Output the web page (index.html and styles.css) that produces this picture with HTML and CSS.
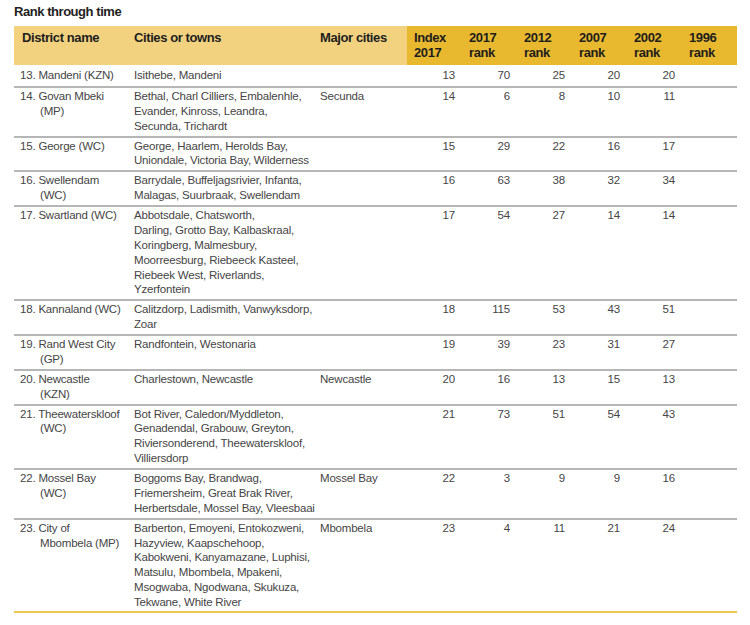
FILE: index.html
```html
<!DOCTYPE html>
<html lang="en">
<head>
<meta charset="utf-8">
<title>Rank through time</title>
<link rel="stylesheet" href="styles.css">
</head>
<body>
<div class="page">
  <h1 class="title">Rank through time</h1>
  <table class="rank">
    <colgroup>
      <col class="c-district"><col class="c-cities"><col class="c-major">
      <col class="c-num"><col class="c-num"><col class="c-num"><col class="c-num"><col class="c-num"><col class="c-num">
    </colgroup>
    <thead>
      <tr>
        <th class="light">District name</th>
        <th class="light">Cities or towns</th>
        <th class="light">Major cities</th>
        <th class="dark">Index<br>2017</th>
        <th class="dark">2017<br>rank</th>
        <th class="dark">2012<br>rank</th>
        <th class="dark">2007<br>rank</th>
        <th class="dark">2002<br>rank</th>
        <th class="dark">1996<br>rank</th>
      </tr>
    </thead>
    <tbody>
      <tr>
        <td class="district">13. Mandeni (KZN)</td>
        <td>Isithebe, Mandeni</td>
        <td></td>
        <td class="num">13</td><td class="num">70</td><td class="num">25</td><td class="num">20</td><td class="num">20</td><td class="num"></td>
      </tr>
      <tr>
        <td class="district">14. Govan Mbeki<br>(MP)</td>
        <td>Bethal, Charl Cilliers, Embalenhle,<br>Evander, Kinross, Leandra,<br>Secunda, Trichardt</td>
        <td>Secunda</td>
        <td class="num">14</td><td class="num">6</td><td class="num">8</td><td class="num">10</td><td class="num">11</td><td class="num"></td>
      </tr>
      <tr>
        <td class="district">15. George (WC)</td>
        <td>George, Haarlem, Herolds Bay,<br>Uniondale, Victoria Bay, Wilderness</td>
        <td></td>
        <td class="num">15</td><td class="num">29</td><td class="num">22</td><td class="num">16</td><td class="num">17</td><td class="num"></td>
      </tr>
      <tr>
        <td class="district">16. Swellendam<br>(WC)</td>
        <td>Barrydale, Buffeljagsrivier, Infanta,<br>Malagas, Suurbraak, Swellendam</td>
        <td></td>
        <td class="num">16</td><td class="num">63</td><td class="num">38</td><td class="num">32</td><td class="num">34</td><td class="num"></td>
      </tr>
      <tr>
        <td class="district">17. Swartland (WC)</td>
        <td>Abbotsdale, Chatsworth,<br>Darling, Grotto Bay, Kalbaskraal,<br>Koringberg, Malmesbury,<br>Moorreesburg, Riebeeck Kasteel,<br>Riebeek West, Riverlands,<br>Yzerfontein</td>
        <td></td>
        <td class="num">17</td><td class="num">54</td><td class="num">27</td><td class="num">14</td><td class="num">14</td><td class="num"></td>
      </tr>
      <tr>
        <td class="district">18. Kannaland (WC)</td>
        <td>Calitzdorp, Ladismith, Vanwyksdorp,<br>Zoar</td>
        <td></td>
        <td class="num">18</td><td class="num">115</td><td class="num">53</td><td class="num">43</td><td class="num">51</td><td class="num"></td>
      </tr>
      <tr>
        <td class="district">19. Rand West City<br>(GP)</td>
        <td>Randfontein, Westonaria</td>
        <td></td>
        <td class="num">19</td><td class="num">39</td><td class="num">23</td><td class="num">31</td><td class="num">27</td><td class="num"></td>
      </tr>
      <tr>
        <td class="district">20. Newcastle<br>(KZN)</td>
        <td>Charlestown, Newcastle</td>
        <td>Newcastle</td>
        <td class="num">20</td><td class="num">16</td><td class="num">13</td><td class="num">15</td><td class="num">13</td><td class="num"></td>
      </tr>
      <tr>
        <td class="district">21. Theewaterskloof<br>(WC)</td>
        <td>Bot River, Caledon/Myddleton,<br>Genadendal, Grabouw, Greyton,<br>Riviersonderend, Theewaterskloof,<br>Villiersdorp</td>
        <td></td>
        <td class="num">21</td><td class="num">73</td><td class="num">51</td><td class="num">54</td><td class="num">43</td><td class="num"></td>
      </tr>
      <tr>
        <td class="district">22. Mossel Bay<br>(WC)</td>
        <td>Boggoms Bay, Brandwag,<br>Friemersheim, Great Brak River,<br>Herbertsdale, Mossel Bay, Vleesbaai</td>
        <td>Mossel Bay</td>
        <td class="num">22</td><td class="num">3</td><td class="num">9</td><td class="num">9</td><td class="num">16</td><td class="num"></td>
      </tr>
      <tr>
        <td class="district">23. City of<br>Mbombela (MP)</td>
        <td>Barberton, Emoyeni, Entokozweni,<br>Hazyview, Kaapschehoop,<br>Kabokweni, Kanyamazane, Luphisi,<br>Matsulu, Mbombela, Mpakeni,<br>Msogwaba, Ngodwana, Skukuza,<br>Tekwane, White River</td>
        <td>Mbombela</td>
        <td class="num">23</td><td class="num">4</td><td class="num">11</td><td class="num">21</td><td class="num">24</td><td class="num"></td>
      </tr>
    </tbody>
  </table>
</div>
</body>
</html>
```

FILE: styles.css
```css
html, body {
  margin: 0;
  padding: 0;
  background: #ffffff;
}

.page {
  padding: 3px 13px 0 14px;
  width: 723px;
  font-family: "Liberation Sans", Arial, sans-serif;
}

.title {
  margin: 0 0 6px 0;
  font-size: 13px;
  line-height: 17px;
  font-weight: bold;
  letter-spacing: -0.45px;
  color: #222222;
}

.rank {
  width: 723px;
  border-collapse: collapse;
  table-layout: fixed;
}

.c-district { width: 113px; }
.c-cities { width: 186px; }
.c-major { width: 94px; }
.c-num { width: 55px; }

.rank th {
  text-align: left;
  vertical-align: top;
  font-size: 13px;
  font-weight: bold;
  letter-spacing: -0.4px;
  line-height: 14.5px;
  color: #1e1e1e;
  padding: 5px 4px 5px 7px;
  height: 29px;
}

.rank th.light { background: #f2d27f; }
.rank th.dark { background: #e8b92e; }
.rank th:first-child { padding-left: 8px; }

.rank td {
  vertical-align: top;
  white-space: nowrap;
  font-size: 11.5px;
  letter-spacing: -0.2px;
  line-height: 14.875px;
  color: #454545;
  padding: 1px 4px 2px 7px;
  border-top: 2px solid #b6b6b6;
}

.rank tbody tr:first-child td {
  border-top: none;
  padding-top: 3px;
  padding-bottom: 3px;
}

.rank tbody tr:last-child td {
  padding-bottom: 1px;
  border-bottom: 2px solid #ebc94e;
}

.rank td.district {
  padding-left: 26px;
  text-indent: -20px;
}

.rank td.num {
  text-align: right;
  padding-right: 7px;
  padding-left: 4px;
}
```
